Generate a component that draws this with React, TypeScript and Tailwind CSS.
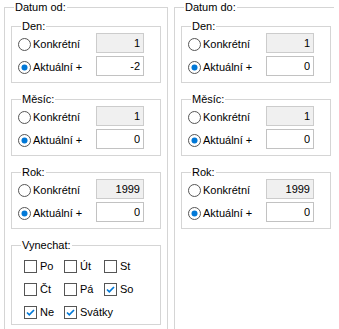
import React from 'react';

interface Part {
  title: string;
  fixed: string;
  offset: string;
}

const fromParts: Part[] = [
  { title: 'Den:', fixed: '1', offset: '-2' },
  { title: 'Měsíc:', fixed: '1', offset: '0' },
  { title: 'Rok:', fixed: '1999', offset: '0' },
];

const toParts: Part[] = [
  { title: 'Den:', fixed: '1', offset: '0' },
  { title: 'Měsíc:', fixed: '1', offset: '0' },
  { title: 'Rok:', fixed: '1999', offset: '0' },
];

const days = [
  { label: 'Po', checked: false },
  { label: 'Út', checked: false },
  { label: 'St', checked: false },
  { label: 'Čt', checked: false },
  { label: 'Pá', checked: false },
  { label: 'So', checked: true },
  { label: 'Ne', checked: true },
  { label: 'Svátky', checked: true },
];

function Radio({ checked }: { checked: boolean }) {
  return (
    <svg width="13" height="13" viewBox="0 0 13 13" className="shrink-0">
      <circle cx="6.5" cy="6.5" r="6" fill="#fff" stroke="#555" strokeWidth="1" />
      {checked && <circle cx="6.5" cy="6.5" r="3" fill="#0078d7" />}
    </svg>
  );
}

function Check({ checked }: { checked: boolean }) {
  return (
    <svg width="13" height="13" viewBox="0 0 13 13" className="shrink-0">
      <rect x="0.5" y="0.5" width="12" height="12" fill="#fff" stroke="#555" strokeWidth="1" />
      {checked && (
        <path d="M3 6.5 L5.3 8.8 L10 4" fill="none" stroke="#0078d7" strokeWidth="1.7" />
      )}
    </svg>
  );
}

function Field({ value, disabled }: { value: string; disabled?: boolean }) {
  return (
    <input
      readOnly
      value={value}
      className={`w-[48px] h-[20px] shrink-0 border text-right pr-[3px] outline-none ${
        disabled ? 'bg-[#f0f0f0] border-[#cccccc]' : 'bg-white border-[#c2c2c2]'
      }`}
    />
  );
}

function Group({ title, children, className }: { title: string; children: React.ReactNode; className?: string }) {
  return (
    <fieldset className={`border border-[#d5d5d5] px-[6px] ${className ?? ''}`}>
      <legend className="ml-[3px] px-[1px] h-[14px] pt-[1px] leading-[13px]">{title}</legend>
      {children}
    </fieldset>
  );
}

function PartBox({ part }: { part: Part }) {
  return (
    <Group title={part.title} className="w-[150px] mt-[5px] pb-[6px]">
      <div className="flex flex-col gap-[3px]">
        <div className="flex items-center h-[20px]">
          <div className="w-[78px] flex items-center mt-[3px]">
            <Radio checked={false} />
            <span className="ml-[2px]">Konkrétní</span>
          </div>
          <Field value={part.fixed} disabled />
        </div>
        <div className="flex items-center h-[20px]">
          <div className="w-[78px] flex items-center mt-[3px]">
            <Radio checked />
            <span className="ml-[2px]">Aktuální +</span>
          </div>
          <Field value={part.offset} />
        </div>
      </div>
    </Group>
  );
}

function DateColumn({ title, parts, skip }: { title: string; parts: Part[]; skip?: boolean }) {
  return (
    <Group title={title} className="w-[163px] h-[345px] shrink-0">
      <div className="flex flex-col gap-[4px]">
        {parts.map((p) => (
          <PartBox key={p.title} part={p} />
        ))}
        {skip && (
          <Group title="Vynechat:" className="w-[150px] mt-[5px] pb-[1px]">
            <div className="grid grid-cols-[40px_40px_40px] gap-y-[1px] pt-[3px] ml-[6px]">
              {days.map((d) => (
                <div key={d.label} className="flex items-center h-[22px]">
                  <Check checked={d.checked} />
                  <span className="ml-[3px]">{d.label}</span>
                </div>
              ))}
            </div>
          </Group>
        )}
      </div>
    </Group>
  );
}

export default function App() {
  return (
    <div className="w-[339px] h-[329px] bg-white overflow-hidden text-black text-[11px] font-['Liberation_Sans',Arial,sans-serif]">
      <div className="w-[334px] h-full overflow-hidden flex gap-[6px] pl-[4px]">
        <DateColumn title="Datum od:" parts={fromParts} skip />
        <DateColumn title="Datum do:" parts={toParts} />
      </div>
    </div>
  );
}
